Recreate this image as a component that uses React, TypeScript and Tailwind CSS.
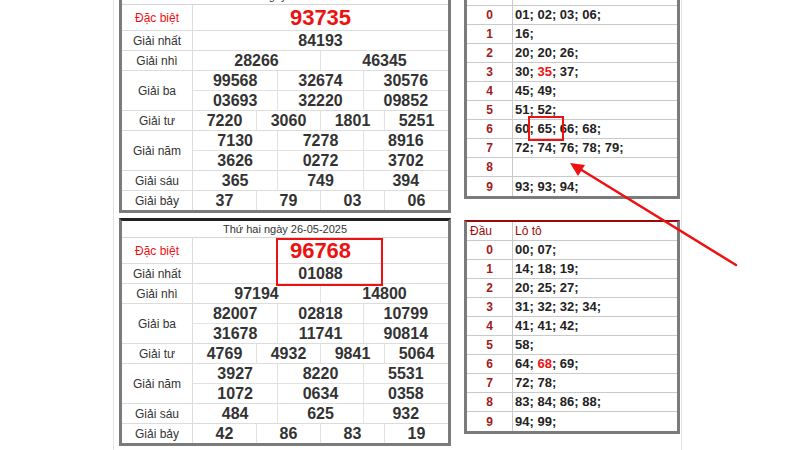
import React from "react";

const font = { fontFamily: '"Liberation Sans", Arial, Helvetica, sans-serif' };

type KqRow = { label: string; h: string; lines: string[][]; special?: boolean };

function makeRows(d: {
  db: string;
  nhat: string;
  nhi: string[];
  ba: string[][];
  tu: string[];
  nam: string[][];
  sau: string[];
  bay: string[];
}): KqRow[] {
  return [
    { label: "Đặc biệt", h: "h-[26px]", lines: [[d.db]], special: true },
    { label: "Giải nhất", h: "h-[20px]", lines: [[d.nhat]] },
    { label: "Giải nhì", h: "h-[20px]", lines: [d.nhi] },
    { label: "Giải ba", h: "h-[40px]", lines: d.ba },
    { label: "Giải tư", h: "h-[20px]", lines: [d.tu] },
    { label: "Giải năm", h: "h-[40px]", lines: d.nam },
    { label: "Giải sáu", h: "h-[20px]", lines: [d.sau] },
    { label: "Giải bảy", h: "h-[19px]", lines: [d.bay] },
  ];
}

function KqTable({ date, rows }: { date: string; rows: KqRow[] }) {
  return (
    <div className="w-[332px] border-[3px] border-[#7b7b7b] border-t-[#222222] bg-white">
      <div className="h-[17px] border-b border-[#d6d6d6] flex items-center justify-center text-[11px] leading-none text-[#333]">
        {date}
      </div>
      {rows.map((r, i) => (
        <div
          key={i}
          className={`flex ${r.h} border-b border-[#dcdcdc] last:border-b-0`}
        >
          <div
            className={`w-[71px] shrink-0 border-r border-[#dcdcdc] flex items-center justify-center text-[12px] ${
              r.special ? "text-[#ee1111]" : "text-[#333]"
            }`}
          >
            {r.label}
          </div>
          <div className="flex-1 flex flex-col">
            {r.lines.map((line, j) => (
              <div
                key={j}
                className="flex-1 flex border-b border-[#e2e2e2] last:border-b-0"
              >
                {line.map((v, k) => (
                  <div
                    key={k}
                    className={`flex-1 flex items-center justify-center font-bold leading-none border-l border-[#e2e2e2] first:border-l-0 ${
                      r.special
                        ? "text-[22px] text-[#ee1111]"
                        : "text-[16px] text-[#333]"
                    }`}
                  >
                    {v}
                  </div>
                ))}
              </div>
            ))}
          </div>
        </div>
      ))}
    </div>
  );
}

type LotoRow = { nums: string[]; red?: string };

function LotoTable({ rows }: { rows: LotoRow[] }) {
  return (
    <div className="w-[216px] border-[3px] border-[#7b7b7b] border-t-2 border-t-[#9a0a0a] bg-white">
      <div className="flex h-[19px] border-b border-[#c9c9c9] text-[12px] text-[#9a0a0a]">
        <div className="w-[46px] shrink-0 border-r border-[#c9c9c9] pl-[3px] flex items-center">
          Đầu
        </div>
        <div className="flex-1 pl-[2px] flex items-center">Lô tô</div>
      </div>
      {rows.map((r, i) => (
        <div
          key={i}
          className="flex h-[19px] border-b border-[#c9c9c9] last:border-b-0"
        >
          <div className="w-[46px] shrink-0 border-r border-[#c9c9c9] flex items-center justify-center text-[12px] font-bold text-[#a01a1a]">
            {i}
          </div>
          <div className="flex-1 pl-[2px] flex items-center text-[13px] font-bold text-[#222] whitespace-pre">
            {r.nums.map((n, k) => (
              <span key={k}>
                <span className={n === r.red ? "text-[#ee1111]" : ""}>{n}</span>
                {k < r.nums.length - 1 ? "; " : ";"}
              </span>
            ))}
          </div>
        </div>
      ))}
    </div>
  );
}

const top = makeRows({
  db: "93735",
  nhat: "84193",
  nhi: ["28266", "46345"],
  ba: [
    ["99568", "32674", "30576"],
    ["03693", "32220", "09852"],
  ],
  tu: ["7220", "3060", "1801", "5251"],
  nam: [
    ["7130", "7278", "8916"],
    ["3626", "0272", "3702"],
  ],
  sau: ["365", "749", "394"],
  bay: ["37", "79", "03", "06"],
});

const bottom = makeRows({
  db: "96768",
  nhat: "01088",
  nhi: ["97194", "14800"],
  ba: [
    ["82007", "02818", "10799"],
    ["31678", "11741", "90814"],
  ],
  tu: ["4769", "4932", "9841", "5064"],
  nam: [
    ["3927", "8220", "5531"],
    ["1072", "0634", "0358"],
  ],
  sau: ["484", "625", "932"],
  bay: ["42", "86", "83", "19"],
});

const lotoTop: LotoRow[] = [
  { nums: ["01", "02", "03", "06"] },
  { nums: ["16"] },
  { nums: ["20", "20", "26"] },
  { nums: ["30", "35", "37"], red: "35" },
  { nums: ["45", "49"] },
  { nums: ["51", "52"] },
  { nums: ["60", "65", "66", "68"] },
  { nums: ["72", "74", "76", "78", "79"] },
  { nums: [] },
  { nums: ["93", "93", "94"] },
];

const lotoBottom: LotoRow[] = [
  { nums: ["00", "07"] },
  { nums: ["14", "18", "19"] },
  { nums: ["20", "25", "27"] },
  { nums: ["31", "32", "32", "34"] },
  { nums: ["41", "41", "42"] },
  { nums: ["58"] },
  { nums: ["64", "68", "69"], red: "68" },
  { nums: ["72", "78"] },
  { nums: ["83", "84", "86", "88"] },
  { nums: ["94", "99"] },
];

export default function App() {
  return (
    <div
      className="relative w-[800px] h-[450px] overflow-hidden bg-white"
      style={font}
    >
      <div className="flex h-full">
        <div className="w-[113px] shrink-0" />
        <div className="flex h-full border-l border-r border-[#e4e4e4] pl-[5px] pr-[1px]">
          <div className="w-[332px] -mt-[15px] flex flex-col gap-[5px]">
            <KqTable date="Thứ ba ngày 27-05-2025" rows={top} />
            <KqTable date="Thứ hai ngày 26-05-2025" rows={bottom} />
          </div>
          <div className="w-[13px] shrink-0" />
          <div className="w-[216px] -mt-[15px] flex flex-col gap-[21px]">
            <LotoTable rows={lotoTop} />
            <LotoTable rows={lotoBottom} />
          </div>
        </div>
      </div>

      {/* annotation rectangles */}
      <div className="absolute left-[528px] top-[116px] w-[36px] h-[25px] border-2 border-[#ee1111]" />
      <div className="absolute left-[276px] top-[238px] w-[107px] h-[48px] border-2 border-[#ee1111]" />

      {/* annotation arrow */}
      <svg
        className="absolute left-0 top-0"
        width="800"
        height="450"
        viewBox="0 0 800 450"
      >
        <line
          x1="736"
          y1="265"
          x2="580"
          y2="169"
          stroke="#ee1111"
          strokeWidth="2.5"
          strokeLinecap="round"
        />
        <polygon points="570,163 585,165 578,176" fill="#ee1111" />
      </svg>
    </div>
  );
}
